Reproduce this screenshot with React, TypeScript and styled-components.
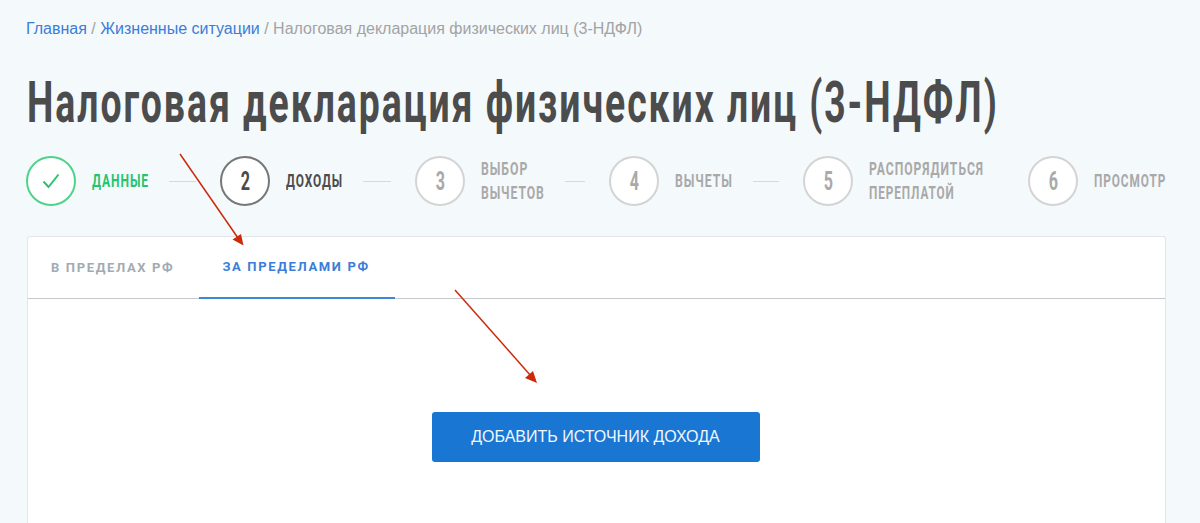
import React, { useLayoutEffect, useRef } from "react";
import styled, { createGlobalStyle } from "styled-components";

const Global = createGlobalStyle`
  html, body { margin: 0; height: 523px; overflow: hidden; background: #f4f9fc; }
  body { font-family: "Roboto", "Liberation Sans", sans-serif; }
`;

const Page = styled.main`
  position: relative;
  width: 1200px;
  height: 523px;
  overflow: hidden;
  padding: 20px 34px 0 27px;
  box-sizing: border-box;
`;

const Crumbs = styled.nav`
  font-family: "Liberation Sans", Arial, sans-serif;
  font-size: 16px;
  line-height: 18px;
  color: #a3a3a3;
  margin-left: -1px;
`;
const Crumb = styled.a`
  color: #3b7dd8;
  text-decoration: none;
`;

const FitBox = styled.span<{ $w: number }>`
  display: block;
  width: ${(p) => p.$w}px;
  white-space: nowrap;
`;
const FitInner = styled.span`
  display: inline-block;
  transform-origin: left center;
`;

function Fit({ w, children }: { w: number; children: React.ReactNode }) {
  const ref = useRef<HTMLSpanElement>(null);
  useLayoutEffect(() => {
    const el = ref.current;
    if (el) el.style.transform = `scaleX(${w / el.offsetWidth})`;
  }, [w]);
  return (
    <FitBox $w={w}>
      <FitInner ref={ref}>{children}</FitInner>
    </FitBox>
  );
}

const Title = styled.h1`
  margin: 30px 0 0;
  font-size: 57px;
  line-height: 70px;
  font-weight: 700;
  letter-spacing: 3px;
  color: #4c4c4c;
`;

const Stepper = styled.ol`
  list-style: none;
  display: flex;
  align-items: center;
  margin: 18px 0 0 -1px;
  padding: 0;
  height: 50px;
`;
const Step = styled.li`
  display: flex;
  align-items: center;
`;
type Tone = "done" | "current" | "todo";
const toneColor: Record<Tone, string> = { done: "#27c46f", current: "#4c4c4c", todo: "#a9a9a9" };
const ringColor: Record<Tone, string> = { done: "#4ed38a", current: "#777777", todo: "#d4d4d4" };

const Circle = styled.span<{ $tone: Tone }>`
  width: 50px;
  height: 50px;
  box-sizing: border-box;
  flex: none;
  border-radius: 50%;
  background: #fff;
  border: 2px solid ${(p) => ringColor[p.$tone]};
  color: ${(p) => toneColor[p.$tone]};
  display: flex;
  align-items: center;
  justify-content: center;
  font-size: 26px;
  font-weight: 700;
`;
const Digit = styled.span`
  display: inline-block;
  transform: scaleX(0.62);
`;
const Label = styled.span<{ $tone: Tone }>`
  margin-left: 16px;
  font-size: 19px;
  line-height: 24px;
  font-weight: 700;
  letter-spacing: 1.5px;
  color: ${(p) => toneColor[p.$tone]};
`;
const Connector = styled.span<{ $w: number }>`
  display: block;
  width: ${(p) => p.$w}px;
  height: 1px;
  background: #d5dadd;
  margin: 0 24px 0 20px;
`;

const Card = styled.section`
  margin-top: 30px;
  height: 320px;
  background: #fff;
  border: 1px solid #e3e6e8;
  border-bottom: 0;
  border-radius: 3px 3px 0 0;
`;
const Tabs = styled.div`
  display: flex;
  height: 61px;
  border-bottom: 1px solid #c6c9cc;
`;
const Tab = styled.div<{ $active?: boolean }>`
  box-sizing: border-box;
  height: 62px;
  padding: 0 25px 1px 23px;
  display: flex;
  align-items: center;
  font-size: 13px;
  font-weight: 700;
  letter-spacing: 1.65px;
  color: ${(p) => (p.$active ? "#3b7dd8" : "#a2abb2")};
  border-bottom: ${(p) => (p.$active ? "2px solid #3f87dc" : "0")};
`;
const CardBody = styled.div`
  display: flex;
  justify-content: center;
  padding-top: 113px;
  padding-right: 2px;
`;
const Primary = styled.button`
  width: 328px;
  height: 50px;
  border: 0;
  border-radius: 3px;
  background: #1976d2;
  color: #f2f7fc;
  font-family: "Liberation Sans", Arial, sans-serif;
  font-size: 16px;
`;
const Arrows = styled.svg`
  position: absolute;
  inset: 0;
  pointer-events: none;
`;

export default function App() {
  return (
    <Page>
      <Global />
      <Crumbs>
        <Crumb href="#">Главная</Crumb> / <Crumb href="#">Жизненные ситуации</Crumb> / Налоговая декларация физических лиц (3-НДФЛ)
      </Crumbs>
      <Title>
        <Fit w={972}>Налоговая декларация физических лиц (3-НДФЛ)</Fit>
      </Title>
      <Stepper>
        <Step>
          <Circle $tone="done">
            <svg width="18" height="16" viewBox="0 0 18 16" fill="none" stroke="#27c46f" strokeWidth="2">
              <path d="M1.5 8.5 L6.5 14 L16.5 1.5" />
            </svg>
          </Circle>
          <Label $tone="done"><Fit w={57}>ДАННЫЕ</Fit></Label>
          <Connector $w={27} />
        </Step>
        <Step>
          <Circle $tone="current"><Digit>2</Digit></Circle>
          <Label $tone="current"><Fit w={57}>ДОХОДЫ</Fit></Label>
          <Connector $w={28} />
        </Step>
        <Step>
          <Circle $tone="todo"><Digit>3</Digit></Circle>
          <Label $tone="todo"><Fit w={47}>ВЫБОР</Fit><Fit w={64}>ВЫЧЕТОВ</Fit></Label>
          <Connector $w={20} />
        </Step>
        <Step>
          <Circle $tone="todo"><Digit>4</Digit></Circle>
          <Label $tone="todo"><Fit w={58}>ВЫЧЕТЫ</Fit></Label>
          <Connector $w={26} />
        </Step>
        <Step>
          <Circle $tone="todo"><Digit>5</Digit></Circle>
          <Label $tone="todo"><Fit w={115}>РАСПОРЯДИТЬСЯ</Fit><Fit w={86}>ПЕРЕПЛАТОЙ</Fit></Label>
          <Connector $w={0} />
        </Step>
        <Step>
          <Circle $tone="todo"><Digit>6</Digit></Circle>
          <Label $tone="todo"><Fit w={72}>ПРОСМОТР</Fit></Label>
        </Step>
      </Stepper>
      <Card>
        <Tabs>
          <Tab>В ПРЕДЕЛАХ РФ</Tab>
          <Tab $active>ЗА ПРЕДЕЛАМИ РФ</Tab>
        </Tabs>
        <CardBody>
          <Primary>ДОБАВИТЬ ИСТОЧНИК ДОХОДА</Primary>
        </CardBody>
      </Card>
      <Arrows width="1200" height="523" viewBox="0 0 1200 523">
        <path d="M180 154 L238 238" stroke="#cc2a0a" strokeWidth="1.5" fill="none" />
        <path d="M243.5 245.5 L232.5 239.5 L241 234 Z" fill="#cc2a0a" />
        <path d="M455 290 L531 376" stroke="#cc2a0a" strokeWidth="1.5" fill="none" />
        <path d="M537 383 L525 378 L533 371 Z" fill="#cc2a0a" />
      </Arrows>
    </Page>
  );
}
